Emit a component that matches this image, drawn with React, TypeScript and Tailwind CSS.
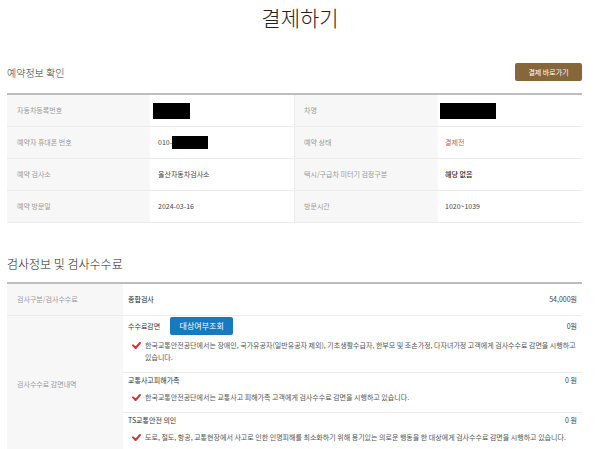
import type { ReactNode } from 'react';

const INFO_ROWS = [
  { l1: '자동차등록번호', v1: 'box1', l2: '차명', v2: 'box2' },
  { l1: '예약자 휴대폰 번호', v1: 'phone', l2: '예약 상태', v2: 'status' },
  { l1: '예약 검사소', v1: '울산자동차검사소', l2: '택시/구급차 미터기 검정구분', v2: 'none' },
  { l1: '예약 방문일', v1: '2024-03-16', l2: '방문시간', v2: '1020~1039' },
];

function Check() {
  return (
    <svg width="9" height="7" viewBox="0 0 9 7" className="mt-[3px] shrink-0">
      <path d="M1 3.4 L3.6 6 L8 1" fill="none" stroke="#d6333b" strokeWidth="2" strokeLinecap="round" strokeLinejoin="round" />
    </svg>
  );
}

function Value({ v }: { v: string }) {
  if (v === 'box1') return <div className="ml-[-5px] h-[16px] w-[37px] bg-black" />;
  if (v === 'box2') return <div className="ml-[-5px] h-[16px] w-[56px] bg-black" />;
  if (v === 'phone')
    return (
      <div className="flex items-center">
        <span>010-</span>
        <div className="h-[13px] w-[36px] bg-black" />
      </div>
    );
  if (v === 'status') return <span className="text-[#c9605f]">결제전</span>;
  if (v === 'none') return <span className="font-medium text-[#222]">해당 없음</span>;
  return <span>{v}</span>;
}

function SubItem({
  name,
  price,
  extra,
  children,
  last,
}: {
  name: string;
  price: string;
  extra?: ReactNode;
  children: ReactNode;
  last?: boolean;
}) {
  return (
    <div className={`pb-[9px] pr-[5px] pl-[5px] ${last ? '' : 'border-b border-[#e9e9e9]'}`}>
      <div className="flex min-h-[14px] items-center justify-between">
        <div className="flex items-center gap-[10px] text-[#333]">
          <span>{name}</span>
          {extra}
        </div>
        <span className="text-[#444]">{price}</span>
      </div>
      <div className="mt-[4px] flex gap-[4px] pl-[4px] leading-[12px] text-[#555]">
        <Check />
        <p>{children}</p>
      </div>
    </div>
  );
}

export default function App() {
  return (
    <div className="h-[449px] w-[600px] overflow-hidden bg-white font-['Noto_Sans_CJK_KR','Noto_Sans',sans-serif] text-[7px] text-[#444]">
      <h1 className="pt-[5px] text-center text-[21px] font-light leading-[24px] text-[#222]">결제하기</h1>

      <div className="ml-[7px] w-[575px]">
        <div className="mt-[34px] flex h-[18px] items-center justify-between">
          <h2 className="text-[10px] font-light text-[#333]">예약정보 확인</h2>
          <button
            type="button"
            className="h-[18px] w-[67px] rounded-[2px] bg-[#86673a] text-[7px] text-white"
          >
            결제 바로가기
          </button>
        </div>

        <div className="mt-[12px] border-t-2 border-[#bdbdbd]">
          {INFO_ROWS.map((r) => (
            <div
              key={r.l1}
              className="grid h-[32px] grid-cols-[143px_145px_143px_144px] border-b border-[#ececec]"
            >
              <div className="flex items-center bg-[#f7f7f7] pl-[10px] text-[#999]">{r.l1}</div>
              <div className="flex items-center pl-[8px] border-r border-[#ececec]">
                <Value v={r.v1} />
              </div>
              <div className="flex items-center bg-[#f7f7f7] pl-[9px] text-[#999]">{r.l2}</div>
              <div className="flex items-center pl-[7px]">
                <Value v={r.v2} />
              </div>
            </div>
          ))}
        </div>

        <h2 className="mt-[33px] text-[12px] font-light leading-[16px] text-[#222]">검사정보 및 검사수수료</h2>

        <div className="mt-[10px] border-t-2 border-[#bdbdbd]">
          <div className="grid h-[32px] grid-cols-[116px_1fr] border-b border-[#ececec]">
            <div className="flex items-center bg-[#f7f7f7] pl-[10px] text-[#999]">검사구분/검사수수료</div>
            <div className="flex items-center justify-between pl-[5px] pr-[5px]">
              <span className="text-[#222]">종합검사</span>
              <span>54,000원</span>
            </div>
          </div>
          <div className="grid grid-cols-[116px_1fr]">
            <div className="flex items-center bg-[#f7f7f7] pl-[10px] text-[#999]">검사수수료 감면내역</div>
            <div>
              <div className="pt-px">
                <SubItem
                  name="수수료감면"
                  price="0원"
                  extra={
                    <button
                      type="button"
                      className="h-[18px] w-[63px] rounded-[2px] bg-[#1779c0] text-[8px] text-white"
                    >
                      대상여부조회
                    </button>
                  }
                >
                  한국교통안전공단에서는 장애인, 국가유공자(일반유공자 제외), 기초생활수급자, 한부모 및 조손가정, 다자녀가정 고객에게 검사수수료 감면을 시행하고
                  <br />
                  있습니다.
                </SubItem>
              </div>
              <SubItem name="교통사고피해가족" price="0 원">
                한국교통안전공단에서는 교통사고 피해가족 고객에게 검사수수료 감면을 시행하고 있습니다.
              </SubItem>
              <SubItem name="TS교통안전 의인" price="0 원" last>
                도로, 철도, 항공, 교통현장에서 사고로 인한 인명피해를 최소화하기 위해 용기있는 의로운 행동을 한 대상에게 검사수수료 감면을 시행하고 있습니다.
              </SubItem>
            </div>
          </div>
        </div>
      </div>
    </div>
  );
}
